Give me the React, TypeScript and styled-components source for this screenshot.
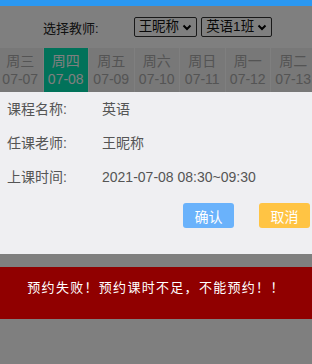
import React from 'react';
import styled, { createGlobalStyle } from 'styled-components';

const GlobalStyle = createGlobalStyle`
  html, body {
    margin: 0;
    padding: 0;
    background: #ffffff;
    font-family: "Liberation Sans", "Noto Sans CJK SC", sans-serif;
  }
`;

const days = [
  { week: '周三', date: '07-07' },
  { week: '周四', date: '07-08' },
  { week: '周五', date: '07-09' },
  { week: '周六', date: '07-10' },
  { week: '周日', date: '07-11' },
  { week: '周一', date: '07-12' },
  { week: '周二', date: '07-13' },
];

const details = [
  { label: '课程名称:', value: '英语' },
  { label: '任课老师:', value: '王昵称' },
  { label: '上课时间:', value: '2021-07-08 08:30~09:30' },
];

const Chevron = () => (
  <svg width="10" height="7" viewBox="0 0 10 7">
    <path d="M1.5 1.5 L5 5 L8.5 1.5" fill="none" stroke="#000" strokeWidth="2" />
  </svg>
);

const App: React.FC = () => {
  const selected = 1;

  return (
    <Page>
      <GlobalStyle />
      <TopBar />
      <Header>
        <HeaderLabel>选择教师:</HeaderLabel>
        <Selects>
          <FakeSelect>王昵称<Chevron /></FakeSelect>
          <FakeSelect>英语1班<Chevron /></FakeSelect>
        </Selects>
      </Header>
      <DayTabs>
        {days.map((d, i) => (
          <DayTab key={d.date} $active={i === selected}>
            <span>{d.week}</span>
            <span>{d.date}</span>
          </DayTab>
        ))}
      </DayTabs>

      <Overlay />

      <Sheet>
        <DetailList>
          {details.map((row) => (
            <DetailRow key={row.label}>
              <DetailLabel>{row.label}</DetailLabel>
              <span>{row.value}</span>
            </DetailRow>
          ))}
        </DetailList>
        <Actions>
          <ActionButton $color="#6ab2fb">确认</ActionButton>
          <ActionButton $color="#ffc444">取消</ActionButton>
        </Actions>
      </Sheet>

      <Toast>预约失败！预约课时不足，不能预约！！</Toast>
    </Page>
  );
};

export default App;

const Page = styled.div`
  position: relative;
  width: 312px;
  height: 364px;
  overflow: hidden;
  background: #ffffff;
`;

const TopBar = styled.div`
  position: relative;
  z-index: 3;
  height: 6px;
  background: #2a98f2;
`;

const Header = styled.div`
  height: 42px;
  display: flex;
  align-items: center;
  padding-left: 43px;
  gap: 35px;
  box-sizing: border-box;
`;

const HeaderLabel = styled.span`
  font-size: 13px;
  color: #222;
`;

const Selects = styled.div`
  display: flex;
  gap: 4px;
`;

const FakeSelect = styled.div`
  display: flex;
  align-items: center;
  gap: 3px;
  height: 18px;
  padding: 0 4px 0 4px;
  border: 1px solid #333;
  border-radius: 2px;
  font-size: 13.5px;
  color: #111;
  line-height: 18px;
`;

const DayTabs = styled.div`
  display: flex;
  margin-left: -2px;
  height: 44px;
  background: #fbfbfb;
`;

const DayTab = styled.div<{ $active: boolean }>`
  flex: 0 0 45.5px;
  display: flex;
  flex-direction: column;
  align-items: center;
  justify-content: center;
  gap: 2px;
  border-right: 1px solid #ffffff;
  box-sizing: border-box;
  font-size: 14px;
  line-height: 16px;
  color: ${(p) => (p.$active ? '#ffffff' : '#a8a8a8')};
  background: ${(p) => (p.$active ? '#02e4b4' : '#f0f0f0')};
`;

const Overlay = styled.div`
  position: absolute;
  inset: 6px 0 0 0;
  z-index: 1;
  background: rgba(0, 0, 0, 0.5);
`;

const Sheet = styled.div`
  position: absolute;
  top: 92px;
  left: 0;
  right: 0;
  height: 162px;
  z-index: 2;
  background: #efeff2;
  box-sizing: border-box;
  padding: 9px 2px 0 7px;
  display: flex;
  flex-direction: column;
`;

const DetailList = styled.div`
  display: flex;
  flex-direction: column;
  gap: 17px;
`;

const DetailRow = styled.div`
  display: flex;
  font-size: 14px;
  line-height: 17px;
  color: #555;
`;

const DetailLabel = styled.span`
  width: 95px;
`;

const Actions = styled.div`
  display: flex;
  justify-content: flex-end;
  gap: 25px;
  margin-top: 17px;
`;

const ActionButton = styled.div<{ $color: string }>`
  width: 51px;
  height: 25px;
  border-radius: 3px;
  background: ${(p) => p.$color};
  color: #ffffff;
  font-size: 14px;
  display: flex;
  align-items: center;
  justify-content: center;
`;

const Toast = styled.div`
  position: absolute;
  top: 267px;
  left: 0;
  right: 0;
  height: 52px;
  z-index: 2;
  background: #900000;
  color: #ffffff;
  font-size: 13px;
  letter-spacing: 1.3px;
  text-align: center;
  box-sizing: border-box;
  padding-top: 13px;
  line-height: 16px;
`;
